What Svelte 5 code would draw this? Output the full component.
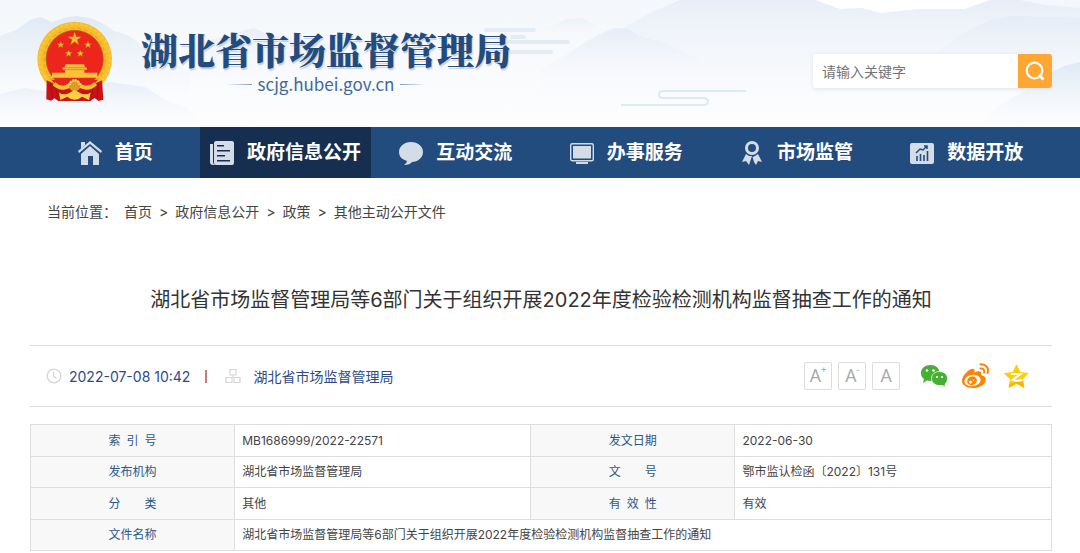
<script>
  const navItems = [
    { label: '首页', icon: 'home' },
    { label: '政府信息公开', icon: 'doc', active: true },
    { label: '互动交流', icon: 'chat' },
    { label: '办事服务', icon: 'screen' },
    { label: '市场监管', icon: 'medal' },
    { label: '数据开放', icon: 'chart' }
  ];

  const crumbs = ['首页', '政府信息公开', '政策', '其他主动公开文件'];
  const title = '湖北省市场监督管理局等6部门关于组织开展2022年度检验检测机构监督抽查工作的通知';

  const rows = [
    ['索 引 号', 'MB1686999/2022-22571', '发文日期', '2022-06-30'],
    ['发布机构', '湖北省市场监督管理局', '文 号', '鄂市监认检函〔2022〕131号'],
    ['分 类', '其他', '有 效 性', '有效']
  ];

  let keyword = '';
</script>

<header class="banner">
  <svg class="scenery" viewBox="0 0 1080 127" preserveAspectRatio="none" aria-hidden="true">
    <defs>
      <linearGradient id="sky" x1="0" y1="0" x2="0" y2="1">
        <stop offset="0" stop-color="#f4f7fb" />
        <stop offset="1" stop-color="#fdfdfe" />
      </linearGradient>
      <linearGradient id="hill" x1="0" y1="0" x2="0" y2="1">
        <stop offset="0" stop-color="#dfe9f4" />
        <stop offset="1" stop-color="#f2f6fc" stop-opacity="0" />
      </linearGradient>
      <linearGradient id="far" x1="0" y1="0" x2="0" y2="1">
        <stop offset="0" stop-color="#e8eef8" />
        <stop offset="1" stop-color="#f6f8fd" stop-opacity="0" />
      </linearGradient>
    </defs>
    <rect width="1080" height="127" fill="url(#sky)" />
    <path fill="#fff" d="M815 0L840 9 862 8 880 13 920 9 965 9 990 0Z" />
    <path fill="url(#hill)" d="M0 36L16 30 30 20 40 17 52 22 64 18 76 16 90 18 102 23 114 31 128 35 145 48 170 58 190 72 190 100H0Z" />
    <path fill="url(#far)" d="M0 94L25 88 50 92 80 83 110 82 145 87 165 100 188 108 202 127H0Z" />
    <path fill="url(#far)" d="M190 44L228 36 246 30 254 28 270 35 300 40 340 46V80H190Z" />
    <path fill="url(#far)" d="M540 70L590 40 625 27 650 13 680 0H815L840 9 862 8 880 13 920 9 965 9 990 0H1020L1045 5 1080 8V100H540Z" />
    <path fill="url(#hill)" opacity=".7" d="M558 64L580 45 600 34 614 28 628 29 640 36 665 43 700 60V70H558Z" />
    <path fill="url(#hill)" opacity=".5" d="M540 27L555 25 566 19 582 18 594 24 600 34H540Z" />
    <path fill="url(#hill)" opacity=".6" d="M935 54L965 32 990 20 1012 16 1080 18V80H935Z" />
    <path fill="url(#hill)" d="M980 127L1000 105 1024 91 1048 74 1064 66 1080 62V127Z" />
    <path fill="none" stroke="#e3ecf5" stroke-width="4" stroke-linecap="round" d="M486 30H534M512 37H524M508 42H568M496 52H551" />
    <path fill="none" stroke="#dceaf4" stroke-width="2" d="M746 91H664q-5 0-5 3.500t5 3.500h39q5 0 5 3.500t-5 3.500H621" />
  </svg>

  <div class="banner-inner">
    <a class="brand" href="#home">
      <svg class="emblem" viewBox="18 15 231 246" role="img" aria-label="国徽">
        <circle cx="134" cy="132" r="112" fill="#f6bd2d" />
        <circle cx="134" cy="132" r="105" fill="none" stroke="#fbc83c" stroke-width="7" stroke-dasharray="9 6" />
        <circle cx="134" cy="132" r="92" fill="none" stroke="#eeab22" stroke-width="5" stroke-dasharray="13 7" />
        <circle cx="134" cy="132" r="86" fill="#ed261d" stroke="#a96910" stroke-width="2" />
        <g fill="#f5bd35" stroke="#a85a10" stroke-width="1">
          <path d="M134 50L139 65H155L142 74 147 90 134 80 121 90 126 74 113 65H129Z" />
          <path id="star" d="M92 79L95 86 103 86 97 91 99 99 92 94 85 99 87 91 81 86 89 86Z" />
          <use href="#star" x="82" />
          <use href="#star" x="24" y="26" />
          <use href="#star" x="59" y="26" />
        </g>
        <path fill="#fcc33a" d="M107 148H162L165 157 170 158V164H163V173H202V188H66V173H105V164H98V158L104 157Z" />
        <path fill="none" stroke="#c47e18" stroke-width="2" d="M103 158H166M105 164H163" />
        <path fill="#e1261c" d="M64 194H204L188 212H80Z" />
        <path fill="#c91117" d="M50 196L80 210 100 220H168L187 210 216 196 220 254 205 258 194 249 181 258H85L73 250 64 257 49 253Z" />
        <path fill="none" stroke="#a50f13" stroke-width="3" d="M62 205L67 247M77 216L83 250M206 205L201 247M189 216L184 250" />
        <path fill="none" stroke="#f8c22f" stroke-width="12" d="M72 206C91 226 114 219 126 204Q134 194 142 204C156 220 178 225 197 206" />
        <circle cx="134" cy="212" r="17" fill="#df9b22" />
        <path fill="none" stroke="#ffe26a" stroke-width="7" stroke-dasharray="5 3" d="M119 211A15 15 0 0 1 149 211" />
        <path fill="#fbd143" d="M87 233Q103 242 119 233L134 225 149 233Q165 242 182 233L177 255 156 245Q134 264 112 245L91 255Z" />
      </svg>
      <span class="brand-text">
        <strong>湖北省市场监督管理局</strong>
        <span class="domain">scjg.hubei.gov.cn</span>
      </span>
    </a>

    <form class="search" on:submit|preventDefault>
      <input type="text" aria-label="关键字" placeholder="请输入关键字" bind:value={keyword} />
      <button type="submit" aria-label="搜索">
        <svg viewBox="0 0 20 20" width="20" height="20">
          <circle cx="9.500" cy="9.500" r="7.800" fill="none" stroke="#fff" stroke-width="2.200" />
          <path d="M14 14L18.500 18.500" stroke="#fff" stroke-width="2.800" />
        </svg>
      </button>
    </form>
  </div>
</header>

<nav class="nav">
  {#each navItems as item}
    <a href="#{item.icon}" class:active={item.active}>
      <svg viewBox="0 0 24 26" width="24" height="26" fill="#d3dce7" aria-hidden="true">
        {#if item.icon === 'home'}
          <path d="M3 2H7V5L3 9Z" />
          <path d="M12 1L24 11 23 13 12 4 1 13 0 11Z" />
          <path d="M12 6L21 14V25H15V16H10V25H3V14Z" />
        {:else if item.icon === 'doc'}
          <path d="M0 4H3V22Q3 24 5 25H3Q0 25 0 22Z" />
          <path fill-rule="evenodd" d="M6 1H22Q24 1 24 3V23Q24 25 22 25H6Q4 25 4 23V3Q4 1 6 1ZM7 5V6.500H14V5ZM7 10V11.500H20V10ZM7 15V16.500H15V15ZM7 20V21.500H20V20Z" />
        {:else if item.icon === 'chat'}
          <path d="M12 2C19 2 24 6.500 24 12S19 22 13 22Q11 25 5 25 8 23 8 21C3 19.500 0 16.500 0 12 0 6.500 5 2 12 2Z" />
        {:else if item.icon === 'screen'}
          <rect x=".7" y="3.700" width="22.600" height="17" rx="1.500" fill="none" stroke="#d3dce7" stroke-width="1.400" />
          <rect x="3" y="6" width="18" height="12.500" />
          <rect x="6" y="22" width="12" height="2" />
        {:else if item.icon === 'medal'}
          <circle cx="12" cy="8" r="5.500" fill="none" stroke="#d3dce7" stroke-width="3" />
          <path d="M6 14L9 16 12 16 10 22 9 25 6 21 2 22ZM18 14L15 16 12.500 17 14 22 16 25 18 21 22 22Z" />
        {:else}
          <path d="M2 3H22Q24 3 24 5V22Q24 24 22 24H2Q0 24 0 22V5Q0 3 2 3Z" />
          <path fill="none" stroke="#224b7e" stroke-width="1.600" d="M7 21V16M10.500 21V14M14 21V15M17.500 21V11" />
          <path fill="none" stroke="#224b7e" stroke-width="1.500" d="M6 13L10 9 13 10 17 6M14 6H17V9" />
        {/if}
      </svg>
      {item.label}
    </a>
  {/each}
</nav>

<main class="page">
  <div class="crumbs">
    <span class="crumb-label">当前位置：</span>
    {#each crumbs as crumb, i}
      {#if i > 0}<span>&gt;</span>{/if}
      <a href="#crumb-{i}">{crumb}</a>
    {/each}
  </div>

  <h1>{title}</h1>

  <div class="meta">
    <svg viewBox="0 0 16 16" width="16" height="16" fill="none" stroke="#d5d5d5" stroke-width="1.300" aria-hidden="true">
      <circle cx="8" cy="8" r="6.800" />
      <path d="M7.500 3.500V8L10.500 10.500" />
    </svg>
    <time datetime="2022-07-08T10:42">2022-07-08 10:42</time>
    <span class="bar"></span>
    <svg viewBox="0 0 16 16" width="16" height="16" fill="none" stroke="#d5d5d5" stroke-width="1.200" aria-hidden="true">
      <path d="M5 1.500H11V7H5ZM1 9.500H7V14.500H1ZM9 9.500H15V14.500H9ZM8 7V9.500" />
    </svg>
    <span class="source">湖北省市场监督管理局</span>

    <div class="tools">
      <button type="button" aria-label="放大字号">A<sup>+</sup></button>
      <button type="button" aria-label="缩小字号">A<sup>-</sup></button>
      <button type="button" aria-label="默认字号">A</button>
    </div>
    <div class="share">
      <a href="#wechat" aria-label="微信">
        <svg viewBox="0 0 28 28" width="28" height="28">
          <path fill="#47b034" d="M10.500 3C16 3 19.500 6.500 19.500 11S16 19 10.500 19L7 18.500 3 21 4 17C2 15.500 1 14 1 11 1 6.500 5 3 10.500 3Z" />
          <path fill="#47b034" stroke="#fff" stroke-width=".7" d="M19.500 9.500C24 9.500 27.500 12.500 27.500 16.500 27.500 19 26.500 21 25 22L25.500 25 22.500 23.500H19.500C15 23.500 11.500 20.500 11.500 16.500S15 9.500 19.500 9.500Z" />
          <g fill="#fff"><circle cx="7" cy="8.500" r="1.300" /><circle cx="13.500" cy="8.500" r="1.300" /><circle cx="17" cy="15" r="1.100" /><circle cx="22" cy="15" r="1.100" /></g>
        </svg>
      </a>
      <a href="#weibo" aria-label="微博">
        <svg viewBox="0 0 28 28" width="28" height="28">
          <path fill="#ff8200" d="M7 9C11 5.500 14.500 6 13.500 10.500 18 8 21.500 9 20 13 28 15 25 22 19 24.500 11 28 1 25 1 19 1 15 4 11.500 7 9Z" />
          <ellipse cx="11.500" cy="18.500" rx="8.200" ry="5.600" fill="#fff" transform="rotate(-7 11.500 18.500)" />
          <ellipse cx="11" cy="18.800" rx="5" ry="4.200" fill="#ff8200" transform="rotate(-20 11 18.800)" />
          <circle cx="9.500" cy="20" r="1.600" fill="#fff" /><circle cx="12.500" cy="18.200" r=".7" fill="#fff" />
          <path fill="none" stroke="#ff8200" stroke-width="2" stroke-linecap="round" d="M19.500 2.500C24 1.500 28.500 6 26.500 11M19.500 6.500C22 6 24 8 23 10.500" />
        </svg>
      </a>
      <a href="#qzone" aria-label="QQ空间">
        <svg viewBox="0 0 28 28" width="28" height="28">
          <path fill="#ffce00" stroke="#ffce00" stroke-linejoin="round" d="M14.500 3L18 10.500 26 11.500 20.500 17 22 25.500 14.500 21.500 7 25.500 8.500 17 2.500 11.500 11 10.500Z" />
          <path fill="#fbb500" d="M20.500 17L22 25.500 14.500 21.500 7 25.500 7.500 22 14 20Z" />
          <path fill="none" stroke="#fff" stroke-width="2" d="M9 12H18.500L10.500 18Q15 19.500 20.500 18" />
        </svg>
      </a>
    </div>
  </div>

  <table>
    <colgroup>
      <col class="key" />
      <col class="value" />
      <col class="key" />
      <col />
    </colgroup>
    <tbody>
      {#each rows as row}
        <tr>
          <th scope="row"><span>{row[0]}</span></th>
          <td>{row[1]}</td>
          <th scope="row"><span>{row[2]}</span></th>
          <td>{row[3]}</td>
        </tr>
      {/each}
      <tr>
        <th scope="row"><span>文件名称</span></th>
        <td colspan="3">{title}</td>
      </tr>
    </tbody>
  </table>
</main>

<style>
  :global(body) {
    margin: 0;
    background: #fff;
    color: #444;
    font-family: Inter, 'Noto Sans CJK SC', sans-serif;
  }

  a {
    color: inherit;
    text-decoration: none;
  }

  svg {
    display: block;
    flex: none;
  }

  .banner {
    position: relative;
  }

  .scenery {
    position: absolute;
    width: 100%;
    height: 100%;
  }

  .banner-inner {
    position: relative;
    display: flex;
    justify-content: space-between;
    padding: 20px 28px 25px 36px;
  }

  .brand {
    display: flex;
    gap: 28px;
  }

  .emblem {
    width: 77px;
    height: 82px;
  }

  .brand-text {
    display: flex;
    flex-direction: column;
    align-items: center;
    padding-top: 6px;
    color: #224b7e;
  }

  .brand strong {
    font: 900 37px/46px 'Noto Serif CJK SC', 'Noto Sans CJK SC', serif;
    text-shadow: 1px 2px 1px #c5cfdc;
  }

  .domain {
    display: flex;
    align-items: center;
    gap: 6px;
    font: 17px/24px 'Noto Sans CJK SC', sans-serif;
    color: #41689b;
  }

  .domain::before,
  .domain::after {
    content: '';
    width: 26px;
    height: 1px;
    background: linear-gradient(to right, transparent, #7d9abb);
  }

  .domain::after {
    background: linear-gradient(to left, transparent, #7d9abb);
  }

  .search {
    display: flex;
    width: 239px;
    height: 34px;
    margin-top: 34px;
    border-radius: 3px;
    box-shadow: 0 1px 4px #dde4ec;
  }

  .search input {
    flex: 1;
    min-width: 0;
    border: 0;
    border-radius: 3px 0 0 3px;
    padding: 0 9px;
    background: #fff;
    font: 14px 'Noto Sans CJK SC', sans-serif;
    outline: none;
  }

  .search input::placeholder {
    color: #757575;
  }

  .search button {
    display: flex;
    align-items: center;
    justify-content: center;
    width: 34px;
    border: 0;
    border-radius: 0 3px 3px 0;
    padding: 0;
    background: #ffa733;
  }

  .nav {
    display: flex;
    padding: 0 28px 0 30px;
    background: #224b7e;
  }

  .nav a {
    display: flex;
    flex: 1;
    align-items: center;
    justify-content: center;
    gap: 13px;
    height: 51px;
    color: #fff;
    font-size: 19px;
    font-weight: 700;
    line-height: 28px;
    white-space: nowrap;
  }

  .nav .active {
    background: #162e4f;
  }

  .page {
    padding: 0 28px 0 30px;
  }

  .crumbs {
    display: flex;
    gap: 7px;
    padding: 24px 17px 0;
    font-size: 14px;
    line-height: 20px;
  }

  h1 {
    margin: 63px 0 30px;
    color: #333;
    font-size: 20px;
    font-weight: 400;
    line-height: 30px;
    text-align: center;
  }

  .meta {
    display: flex;
    align-items: center;
    height: 60px;
    border: 1px solid #dedede;
    border-width: 1px 0;
    padding: 0 22px 0 16px;
    color: #2d4b86;
    font-size: 14px;
  }

  time {
    margin-left: 7px;
  }

  .bar {
    width: 2px;
    height: 13px;
    margin: 0 18px 0 15px;
    background: #c08078;
  }

  .source {
    margin-left: 12px;
  }

  .tools {
    display: flex;
    gap: 6px;
    margin-left: auto;
  }

  .tools button {
    display: flex;
    align-items: center;
    justify-content: center;
    width: 28px;
    height: 28px;
    border: 1px solid #dcdcdc;
    border-radius: 2px;
    padding: 0;
    background: #fff;
    color: #aaa;
    font: 18px/26px Roboto, sans-serif;
  }

  .tools sup {
    align-self: flex-start;
    padding-top: 3px;
    font-size: 9px;
    line-height: 9px;
  }

  .share {
    display: flex;
    gap: 13px;
    margin-left: 20px;
  }

  table {
    width: 100%;
    height: 127px;
    margin-top: 17px;
    border-collapse: collapse;
    table-layout: fixed;
    font-size: 12px;
    line-height: 18px;
  }

  .key {
    width: 20%;
  }

  .value {
    width: 29%;
  }

  th,
  td {
    border: 1px solid #dedede;
    padding: 1px 7px 0;
    text-align: left;
  }

  th {
    background: #f8f8f8;
    color: #2d5788;
    font-weight: 400;
    text-align: center;
  }

  th span {
    display: inline-block;
    width: 48px;
    text-align-last: justify;
  }
</style>
